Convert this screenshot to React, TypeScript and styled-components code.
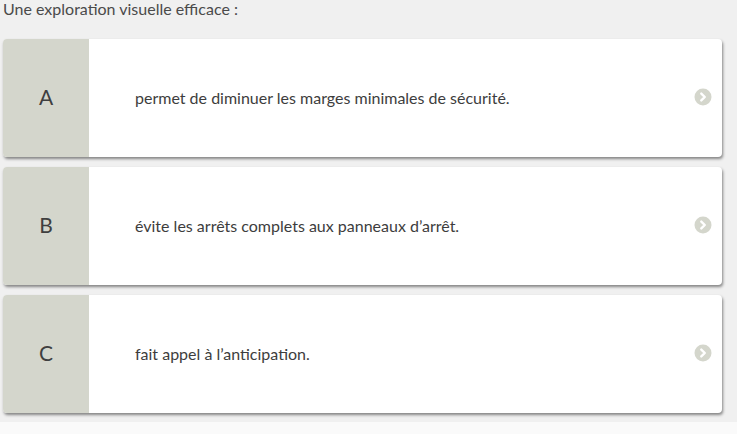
import React from 'react'
import styled, { createGlobalStyle } from 'styled-components'

const GlobalStyle = createGlobalStyle`
  html, body {
    margin: 0;
    padding: 0;
    background: #fafafa;
  }
  body {
    font-family: Lato, "Open Sans", sans-serif;
  }
`

const Page = styled.div`
  background: #f0f0f0;
  width: 737px;
  height: 422px;
  box-sizing: border-box;
  padding: 0 15px 0 3px;
`

const Question = styled.div`
  font-size: 16px;
  color: #4a4a4a;
  line-height: 18px;
  height: 39px;
`

const List = styled.div`
  display: flex;
  flex-direction: column;
  gap: 10px;
`

const Card = styled.div`
  display: flex;
  height: 118px;
  background: #fff;
  border-radius: 4px;
  overflow: hidden;
  box-shadow: 1px 2px 3px rgba(0, 0, 0, 0.45);
  cursor: pointer;
`

const Letter = styled.div`
  width: 86px;
  flex: none;
  background: #d4d6cc;
  display: flex;
  align-items: center;
  justify-content: center;
  font-size: 21px;
  color: #3f3f3f;
  padding-bottom: 4px;
`

const Answer = styled.div`
  flex: 1;
  display: flex;
  align-items: center;
  padding-left: 46px;
  padding-bottom: 2px;
  font-size: 16px;
  color: #3d3d3d;
`

const Arrow = styled.div`
  width: 28px;
  flex: none;
  display: flex;
  align-items: center;
  justify-content: flex-start;
  padding-bottom: 2px;
`

const choices = [
  { letter: 'A', text: 'permet de diminuer les marges minimales de sécurité.' },
  { letter: 'B', text: 'évite les arrêts complets aux panneaux d’arrêt.' },
  { letter: 'C', text: 'fait appel à l’anticipation.' },
]

function Chevron() {
  return (
    <svg width="18" height="18" viewBox="0 0 18 18">
      <circle cx="9" cy="9" r="8.5" fill="#d4d6cc" />
      <path d="M7.3 5.6 L10.8 9 L7.3 12.4" stroke="#fff" strokeWidth="2.4" fill="none" strokeLinecap="round" strokeLinejoin="round" />
    </svg>
  )
}

export default function App() {
  return (
    <>
      <GlobalStyle />
      <Page>
        <Question>Une exploration visuelle efficace :</Question>
        <List>
          {choices.map(c => (
            <Card key={c.letter}>
              <Letter>{c.letter}</Letter>
              <Answer>{c.text}</Answer>
              <Arrow><Chevron /></Arrow>
            </Card>
          ))}
        </List>
      </Page>
    </>
  )
}
